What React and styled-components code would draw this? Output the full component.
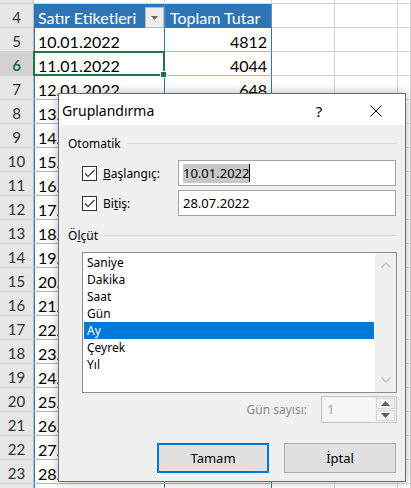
import React from "react";
import styled, { createGlobalStyle, css } from "styled-components";

const GlobalStyle = createGlobalStyle`
  html, body { margin: 0; padding: 0; background: #fff; }
  body { width: 411px; height: 488px; overflow: hidden; }
`;

const Page = styled.div`
  position: relative;
  width: 411px;
  height: 488px;
  overflow: hidden;
  font-family: Lato, "Liberation Sans", sans-serif;
`;

/* ---------- spreadsheet ---------- */

const Sheet = styled.div`
  display: grid;
  grid-template-columns: 34px 131px 107px 63px 63px 1fr;
  grid-auto-rows: 24px;
  margin-top: -20px;
`;

const Cell = styled.div`
  position: relative;
  box-sizing: border-box;
  display: flex;
  align-items: flex-start;
  justify-content: ${p => (p.$right ? "flex-end" : "flex-start")};
  padding: 4px 4px 0 4px;
  font-size: 16px;
  line-height: 19px;
  color: #000;
  white-space: nowrap;
  background: #fff;
  border-right: 1px solid #d4d4d4;
  border-bottom: 1px solid #d4d4d4;

  ${p =>
    p.$kind === "head" &&
    css`
      justify-content: center;
      padding: 4px 0 0;
      font-size: 15px;
      background: ${p.$active ? "#d2d2d2" : "#e6e6e6"};
      color: ${p.$active ? "#217346" : "#333"};
      font-weight: ${p.$active ? 700 : 400};
      border-right-color: #bdbdbd;
      border-bottom-color: #d0d0d0;
    `}

  ${p =>
    p.$kind === "pivotHead" &&
    css`
      background: #2e75b6;
      color: #fff;
      border-right-color: #5b93c9;
      border-bottom-color: #2e75b6;
    `}

  ${p =>
    p.$kind === "pivot" &&
    css`
      border-right-color: #2e75b6;
      border-bottom-color: #9bc2e6;
    `}

  ${p =>
    p.$edge &&
    css`
      box-shadow: inset 1px 0 0 #2e75b6;
    `}

  ${p =>
    p.$selected &&
    css`
      z-index: 1;
      &::after {
        content: "";
        position: absolute;
        left: -1px;
        top: -1px;
        right: -1px;
        bottom: -1px;
        border: 2px solid #217346;
      }
      &::before {
        content: "";
        position: absolute;
        right: -3px;
        bottom: -3px;
        width: 5px;
        height: 5px;
        background: #217346;
        border: 1px solid #fff;
        z-index: 2;
      }
    `}
`;

const FilterButton = styled.div`
  align-self: center;
  margin-left: auto;
  margin-right: -4px;
  width: 19px;
  height: 21px;
  box-sizing: border-box;
  border: 1px solid #b9b9b9;
  background: #ececec;
  display: flex;
  align-items: center;
  justify-content: center;
`;

/* ---------- dialog ---------- */

const Dialog = styled.div`
  position: absolute;
  left: 58px;
  top: 93px;
  width: 348px;
  height: 389px;
  box-sizing: border-box;
  border: 1px solid #6b6b6b;
  background: #f0f0f0;
  box-shadow: 0 0 10px rgba(0, 0, 0, 0.28);
  font-family: "Noto Sans", "Segoe UI", sans-serif;
  font-size: 12px;
  color: #000;
  display: flex;
  flex-direction: column;
`;

const TitleBar = styled.div`
  height: 31px;
  background: #fff;
  display: flex;
  align-items: center;
  padding-left: 3px;
`;

const Title = styled.div`
  flex: 1;
  font-size: 14px;
  padding-top: 2px;
`;

const HelpButton = styled.div`
  width: 20px;
  margin-right: 24px;
  text-align: center;
  font-size: 15px;
  padding-top: 2px;
`;

const CloseButton = styled.div`
  width: 46px;
  margin-right: 6px;
  display: flex;
  justify-content: center;
  padding-top: 2px;
`;

const Body = styled.div`
  flex: 1;
  display: flex;
  flex-direction: column;
  padding: 0 8px 0 9px;
`;

const GroupHeader = styled.div`
  height: 16px;
  margin-top: ${p => p.$top}px;
  display: flex;
  align-items: center;
  gap: 6px;
  &::after {
    content: "";
    flex: 1;
    height: 1px;
    background: #dcdcdc;
  }
`;

const FieldRow = styled.div`
  display: flex;
  align-items: center;
  height: 26px;
  margin-top: ${p => p.$top}px;
`;

const CheckLabel = styled.label`
  width: 110px;
  box-sizing: border-box;
  padding-left: 14px;
  display: flex;
  align-items: center;
  gap: 6px;
`;

const CheckBox = styled.span`
  width: 15px;
  height: 15px;
  box-sizing: border-box;
  border: 1px solid #333;
  background: #fff;
  display: flex;
  align-items: center;
  justify-content: center;
`;

const TextBox = styled.div`
  flex: 1;
  height: 26px;
  margin-right: 1px;
  box-sizing: border-box;
  border: 1px solid #a3a3a3;
  background: #fff;
  display: flex;
  align-items: center;
  padding-left: 4px;
  font-size: 13px;
`;

const Selection = styled.span`
  background: #c8c8c8;
  line-height: 19px;
`;

const Caret = styled.span`
  width: 1px;
  height: 18px;
  background: #000;
`;

const ListBox = styled.div`
  height: 141px;
  margin: 9px 0 0 14px;
  box-sizing: border-box;
  border: 1px solid #8c8c8c;
  background: #fff;
  display: flex;
`;

const Items = styled.div`
  flex: 1;
  padding: 1px;
`;

const Item = styled.div`
  height: 17px;
  line-height: 17px;
  padding-left: 3px;
  background: ${p => (p.$selected ? "#0078d7" : "transparent")};
  color: ${p => (p.$selected ? "#fff" : "#000")};
`;

const ScrollBar = styled.div`
  width: 21px;
  background: #f0f0f0;
  display: flex;
  flex-direction: column;
  justify-content: space-between;
  align-items: center;
  padding: 9px 0 9px;
`;

const DaysRow = styled.div`
  display: flex;
  justify-content: flex-end;
  align-items: center;
  height: 27px;
  margin-top: 3px;
`;

const DaysLabel = styled.span`
  color: #8a8a8a;
  margin-right: 14px;
`;

const SpinBox = styled.div`
  width: 76px;
  height: 27px;
  box-sizing: border-box;
  border: 1px solid #c6c6c6;
  display: flex;
  padding: 1px;
`;

const SpinText = styled.div`
  flex: 1;
  background: #f6f6f6;
  color: #9aa3ad;
  padding-left: 4px;
  font-size: 13px;
  line-height: 23px;
`;

const SpinButtons = styled.div`
  width: 19px;
  margin-left: 1px;
  display: flex;
  flex-direction: column;
  gap: 1px;
`;

const SpinButton = styled.div`
  flex: 1;
  box-sizing: border-box;
  border: 1px solid #d6d6d6;
  background: #f0f0f0;
  display: flex;
  align-items: center;
  justify-content: center;
`;

const ButtonRow = styled.div`
  display: flex;
  justify-content: flex-end;
  gap: 15px;
  margin: 20px 1px 0 0;
`;

const Button = styled.div`
  width: 112px;
  height: 30px;
  box-sizing: border-box;
  background: #e1e1e1;
  border: ${p => (p.$default ? "2px solid #0078d7" : "1px solid #adadad")};
  display: flex;
  align-items: center;
  justify-content: center;
  font-size: 13px;
`;

/* ---------- icons ---------- */

const Check = () => (
  <svg width="13" height="13" viewBox="0 0 13 13">
    <path d="M2 6.5 L5 9.5 L11.5 3" fill="none" stroke="#333" strokeWidth="1.1" />
  </svg>
);

const CloseIcon = () => (
  <svg width="12" height="12" viewBox="0 0 12 12">
    <path d="M0.5 0.5 L11.5 11.5 M11.5 0.5 L0.5 11.5" stroke="#000" strokeWidth="1" />
  </svg>
);

const Chevron = ({ up }) => (
  <svg width="10" height="6" viewBox="0 0 10 6">
    <path
      d={up ? "M0.5 5.5 L5 1 L9.5 5.5" : "M0.5 0.5 L5 5 L9.5 0.5"}
      fill="none"
      stroke="#c2c2c2"
      strokeWidth="1.4"
    />
  </svg>
);

const Triangle = ({ up, color = "#555", w = 8, h = 4 }) => (
  <svg width={w} height={h} viewBox={`0 0 ${w} ${h}`}>
    <path d={up ? `M0 ${h} L${w / 2} 0 L${w} ${h}Z` : `M0 0 L${w} 0 L${w / 2} ${h}Z`} fill={color} />
  </svg>
);

/* ---------- data ---------- */

const amounts = [4812, 4044, 648, 1290, 3120, 2245, 870, 1534, 2980, 410, 1765, 3302, 955, 2140, 1188, 2671, 734, 1920, 1410];
const units = ["Saniye", "Dakika", "Saat", "Gün", "Ay", "Çeyrek", "Yıl"];

// row 3 and row 24 only peek in at the edges, so their text stays out of view
const rowNumbers = Array.from({ length: 22 }, (_, i) => i + 3);

function SheetRow({ n }) {
  if (n === 3) {
    return (
      <>
        <Cell $kind="head" />
        <Cell />
        <Cell />
        <Cell />
        <Cell />
        <Cell />
      </>
    );
  }
  if (n === 4) {
    return (
      <>
        <Cell $kind="head">{n}</Cell>
        <Cell $kind="pivotHead">
          Satır Etiketleri
          <FilterButton>
            <Triangle color="#666" w={7} h={4} />
          </FilterButton>
        </Cell>
        <Cell $kind="pivotHead" style={{ paddingLeft: 5 }}>
          Toplam Tutar
        </Cell>
        <Cell />
        <Cell />
        <Cell />
      </>
    );
  }
  const last = n === 24;
  const day = String(n + 5).padStart(2, "0");
  return (
    <>
      <Cell $kind="head" $active={n === 6}>
        {last ? null : n}
      </Cell>
      <Cell $kind="pivot" $edge $selected={n === 6}>
        {last ? null : `${day}.01.2022`}
      </Cell>
      <Cell $kind="pivot" $right>
        {last ? null : amounts[n - 5]}
      </Cell>
      <Cell />
      <Cell />
      <Cell />
    </>
  );
}

export default function App() {
  return (
    <Page>
      <GlobalStyle />
      <Sheet>
        {rowNumbers.map(n => (
          <SheetRow key={n} n={n} />
        ))}
      </Sheet>

      <Dialog>
        <TitleBar>
          <Title>Gruplandırma</Title>
          <HelpButton>?</HelpButton>
          <CloseButton>
            <CloseIcon />
          </CloseButton>
        </TitleBar>

        <Body>
          <GroupHeader $top={10}>Otomatik</GroupHeader>

          <FieldRow $top={9}>
            <CheckLabel>
              <CheckBox>
                <Check />
              </CheckBox>
              <span>
                <u>B</u>aşlangıç:
              </span>
            </CheckLabel>
            <TextBox>
              <Selection>10.01.2022</Selection>
              <Caret />
            </TextBox>
          </FieldRow>

          <FieldRow $top={4}>
            <CheckLabel>
              <CheckBox>
                <Check />
              </CheckBox>
              <span>
                Bi<u>t</u>iş:
              </span>
            </CheckLabel>
            <TextBox>28.07.2022</TextBox>
          </FieldRow>

          <GroupHeader $top={11}>
            <span>
              Ö<u>l</u>çüt
            </span>
          </GroupHeader>

          <ListBox>
            <Items>
              {units.map(u => (
                <Item key={u} $selected={u === "Ay"}>
                  {u}
                </Item>
              ))}
            </Items>
            <ScrollBar>
              <Chevron up />
              <Chevron />
            </ScrollBar>
          </ListBox>

          <DaysRow>
            <DaysLabel>Gün sayısı:</DaysLabel>
            <SpinBox>
              <SpinText>1</SpinText>
              <SpinButtons>
                <SpinButton>
                  <Triangle up color="#606060" w={9} h={5} />
                </SpinButton>
                <SpinButton>
                  <Triangle color="#606060" w={9} h={5} />
                </SpinButton>
              </SpinButtons>
            </SpinBox>
          </DaysRow>

          <ButtonRow>
            <Button $default>Tamam</Button>
            <Button>İptal</Button>
          </ButtonRow>
        </Body>
      </Dialog>
    </Page>
  );
}
